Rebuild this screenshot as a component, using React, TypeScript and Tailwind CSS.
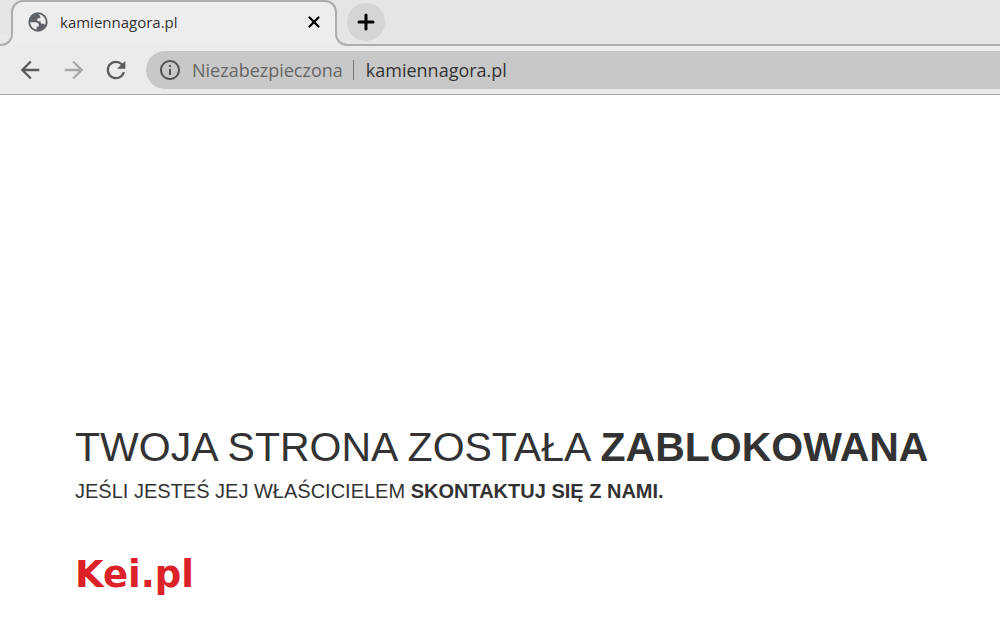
import { useState } from "react";
import { Plus, X } from "lucide-react";
import {
  MdArrowBack,
  MdArrowForward,
  MdInfoOutline,
  MdRefresh,
} from "react-icons/md";

const GlobeIcon = () => {
  return (
    <svg viewBox="0 0 20 20" className="size-5" aria-hidden="true">
      <circle cx="10" cy="10" r="9.7" fill="#5f6368" />
      <path
        d="M2.3 10.2h5c2 0 3.6 1.3 3.6 3.1 0 .9-.6 1.5-1.5 1.5H8.6v2.8C5 17 2.4 14 2.3 10.2z"
        fill="#ededed"
      />
      <path
        d="M10.8 2.3c3.2.3 5.8 2.6 6.7 5.7.4 1.7.1 3.5-.6 5.2-.4-.9-1.1-1.4-2-1.4h-.8c-.9 0-1.5-.7-1.5-1.5V9.3h-2c-.8 0-1.4-.6-1.4-1.4 0-1 .6-1.7 1.600-1.700h.5c.7 0 1.200-.5 1.200-1.200z"
        fill="#ededed"
      />
    </svg>
  );
};

const TabStrip = () => {
  return (
    <div className="flex h-[46px] bg-[#e5e5e5]">
      <div className="relative z-10 -mr-0.5 h-3 w-[13px] shrink-0 self-end bg-[#ededed]">
        <div className="h-full rounded-br-xl border-r-2 border-b-2 border-[#adadad] bg-[#e8e8e8]" />
      </div>
      <div className="flex w-[326px] shrink-0 items-center rounded-t-xl border-x-2 border-t-2 border-[#adadad] bg-[#ededed] pr-3 pb-1 pl-[15px]">
        <GlobeIcon />
        <span className="ml-3 flex-1 text-[15px] text-[#333333]">
          kamiennagora.pl
        </span>
        <button aria-label="Zamknij kartę" className="text-black">
          <X className="size-[18px]" strokeWidth={3} />
        </button>
      </div>
      <div className="relative z-10 -ml-0.5 h-3 w-3 shrink-0 self-end bg-[#ededed]">
        <div className="h-full rounded-bl-xl border-b-2 border-l-2 border-[#adadad] bg-[#e5e5e5]" />
      </div>
      <div className="flex flex-1 items-center border-b-2 border-[#adadad]">
        <button
          aria-label="Nowa karta"
          className="flex size-[38px] items-center justify-center rounded-full bg-[#d5d5d5] text-black"
        >
          <Plus className="size-6" strokeWidth={3} />
        </button>
      </div>
    </div>
  );
};

const Toolbar = () => {
  const [url, setUrl] = useState("kamiennagora.pl");
  return (
    <div className="flex h-[49px] items-center border-b border-[#a9a9a9] bg-[#ebebeb] pl-4">
      <button aria-label="Wstecz" className="text-[#5a5a5a]">
        <MdArrowBack className="size-7" />
      </button>
      <button aria-label="Dalej" className="ml-4 text-[#a8a8a8]">
        <MdArrowForward className="size-7" />
      </button>
      <button aria-label="Odśwież" className="ml-[14px] text-[#5a5a5a]">
        <MdRefresh className="size-7" />
      </button>
      <div className="ml-4 flex h-[38px] flex-1 items-center rounded-l-full bg-[#c8c8c8] pl-3 text-lg">
        <button className="flex items-center text-[#666666]">
          <MdInfoOutline className="mr-2.5 size-6 text-[#555555]" />
          Niezabezpieczona
        </button>
        <span className="mr-3 ml-2.5 h-5 w-px bg-[#777777]" />
        <input
          aria-label="Adres strony"
          className="min-w-0 flex-1 bg-transparent text-[#333333] outline-none"
          value={url}
          onChange={(e) => setUrl(e.target.value)}
        />
      </div>
    </div>
  );
};

const App = () => {
  return (
    <div className="min-h-screen bg-white">
      <header className="font-['Open_Sans',sans-serif]">
        <TabStrip />
        <Toolbar />
      </header>
      <main className="pt-[328px] pr-6 pl-[75px] font-['Liberation_Sans',sans-serif] text-[#333333]">
        <h1 className="text-[41px] leading-[48px]">
          TWOJA STRONA ZOSTAŁA <strong>ZABLOKOWANA</strong>
        </h1>
        <p className="mt-2 text-[20px] leading-6">
          JEŚLI JESTEŚ JEJ WŁAŚCICIELEM <strong>SKONTAKTUJ SIĘ Z NAMI.</strong>
        </p>
        <a
          href="/"
          className="mt-[52px] inline-block font-['DejaVu_Sans',sans-serif] text-[37px] leading-10 font-bold text-[#dc2128]"
        >
          Kei.pl
        </a>
      </main>
    </div>
  );
};

export default App;
